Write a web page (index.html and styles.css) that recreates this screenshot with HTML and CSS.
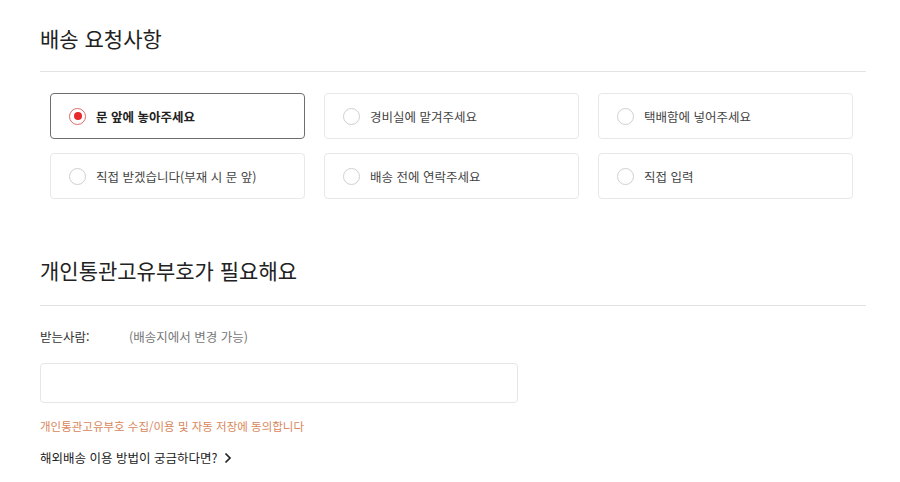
FILE: index.html
```html
<!DOCTYPE html>
<html lang="ko">
<head>
<meta charset="utf-8">
<link rel="stylesheet" href="styles.css">
</head>
<body>
<div class="page">
  <section class="section">
    <h2 class="section-title">배송 요청사항</h2>
    <div class="options">
      <label class="option selected"><span class="radio"></span><span class="option-text">문 앞에 놓아주세요</span></label>
      <label class="option"><span class="radio"></span><span class="option-text">경비실에 맡겨주세요</span></label>
      <label class="option"><span class="radio"></span><span class="option-text">택배함에 넣어주세요</span></label>
      <label class="option"><span class="radio"></span><span class="option-text">직접 받겠습니다(부재 시 문 앞)</span></label>
      <label class="option"><span class="radio"></span><span class="option-text">배송 전에 연락주세요</span></label>
      <label class="option"><span class="radio"></span><span class="option-text">직접 입력</span></label>
    </div>
  </section>
  <section class="section second">
    <h2 class="section-title">개인통관고유부호가 필요해요</h2>
    <div class="receiver">
      <span class="receiver-label">받는사람:</span>
      <span class="receiver-note">(배송지에서 변경 가능)</span>
    </div>
    <div class="input-box"></div>
    <p class="agree">개인통관고유부호 수집/이용 및 자동 저장에 동의합니다</p>
    <a class="help">해외배송 이용 방법이 궁금하다면?<svg class="chev" width="8" height="12" viewBox="0 0 8 12"><polyline points="1.5,1.5 6,6 1.5,10.5" fill="none" stroke="#222" stroke-width="1.7"/></svg></a>
  </section>
</div>
</body>
</html>
```
FILE: styles.css
```css
* { box-sizing: border-box; }
html, body { margin: 0; padding: 0; background: #fff; }
body {
  font-family: "Noto Sans CJK KR", "Noto Sans", sans-serif;
  color: #333;
}
.page { width: 826px; margin-left: 40px; }
.section-title {
  margin: 0;
  padding: 24px 0 19px;
  font-size: 21px;
  line-height: 28px;
  font-weight: 400;
  color: #222;
  border-bottom: 1px solid #e3e3e3;
}
.options {
  display: grid;
  grid-template-columns: repeat(3, 255px);
  column-gap: 19px;
  row-gap: 14px;
  margin: 21px 0 0 10px;
}
.option {
  display: flex;
  align-items: center;
  height: 46px;
  border: 1px solid #e8e8e8;
  border-radius: 4px;
  padding-left: 18px;
  font-size: 12.5px;
  color: #444;
}
.option.selected { border-color: #6e6e6e; }
.option.selected .option-text { font-weight: 700; color: #222; }
.radio {
  width: 17px;
  height: 17px;
  border-radius: 50%;
  border: 1px solid #cfcfcf;
  margin-right: 10px;
  flex: none;
  position: relative;
}
.selected .radio { border-color: #e06a6a; }
.selected .radio::after {
  content: "";
  position: absolute;
  left: 3.5px; top: 3.5px;
  width: 8px; height: 8px;
  border-radius: 50%;
  background: #e8282b;
}
.second { margin-top: 33px; }
.second .section-title { padding-bottom: 21px; }
.receiver {
  display: flex;
  font-size: 12.5px;
  line-height: 20px;
  margin-top: 21px;
}
.receiver-label { width: 89px; color: #333; }
.receiver-note { color: #777; }
.input-box {
  width: 478px;
  height: 40px;
  margin-top: 16px;
  border: 1px solid #e6e6e6;
  border-radius: 4px;
}
.agree {
  margin: 13px 0 0;
  font-size: 11.5px;
  line-height: 20px;
  color: #d8875c;
}
.help {
  display: flex;
  align-items: center;
  margin-top: 12px;
  font-size: 12.5px;
  line-height: 20px;
  color: #222;
}
.chev { margin-left: 7px; }
```
